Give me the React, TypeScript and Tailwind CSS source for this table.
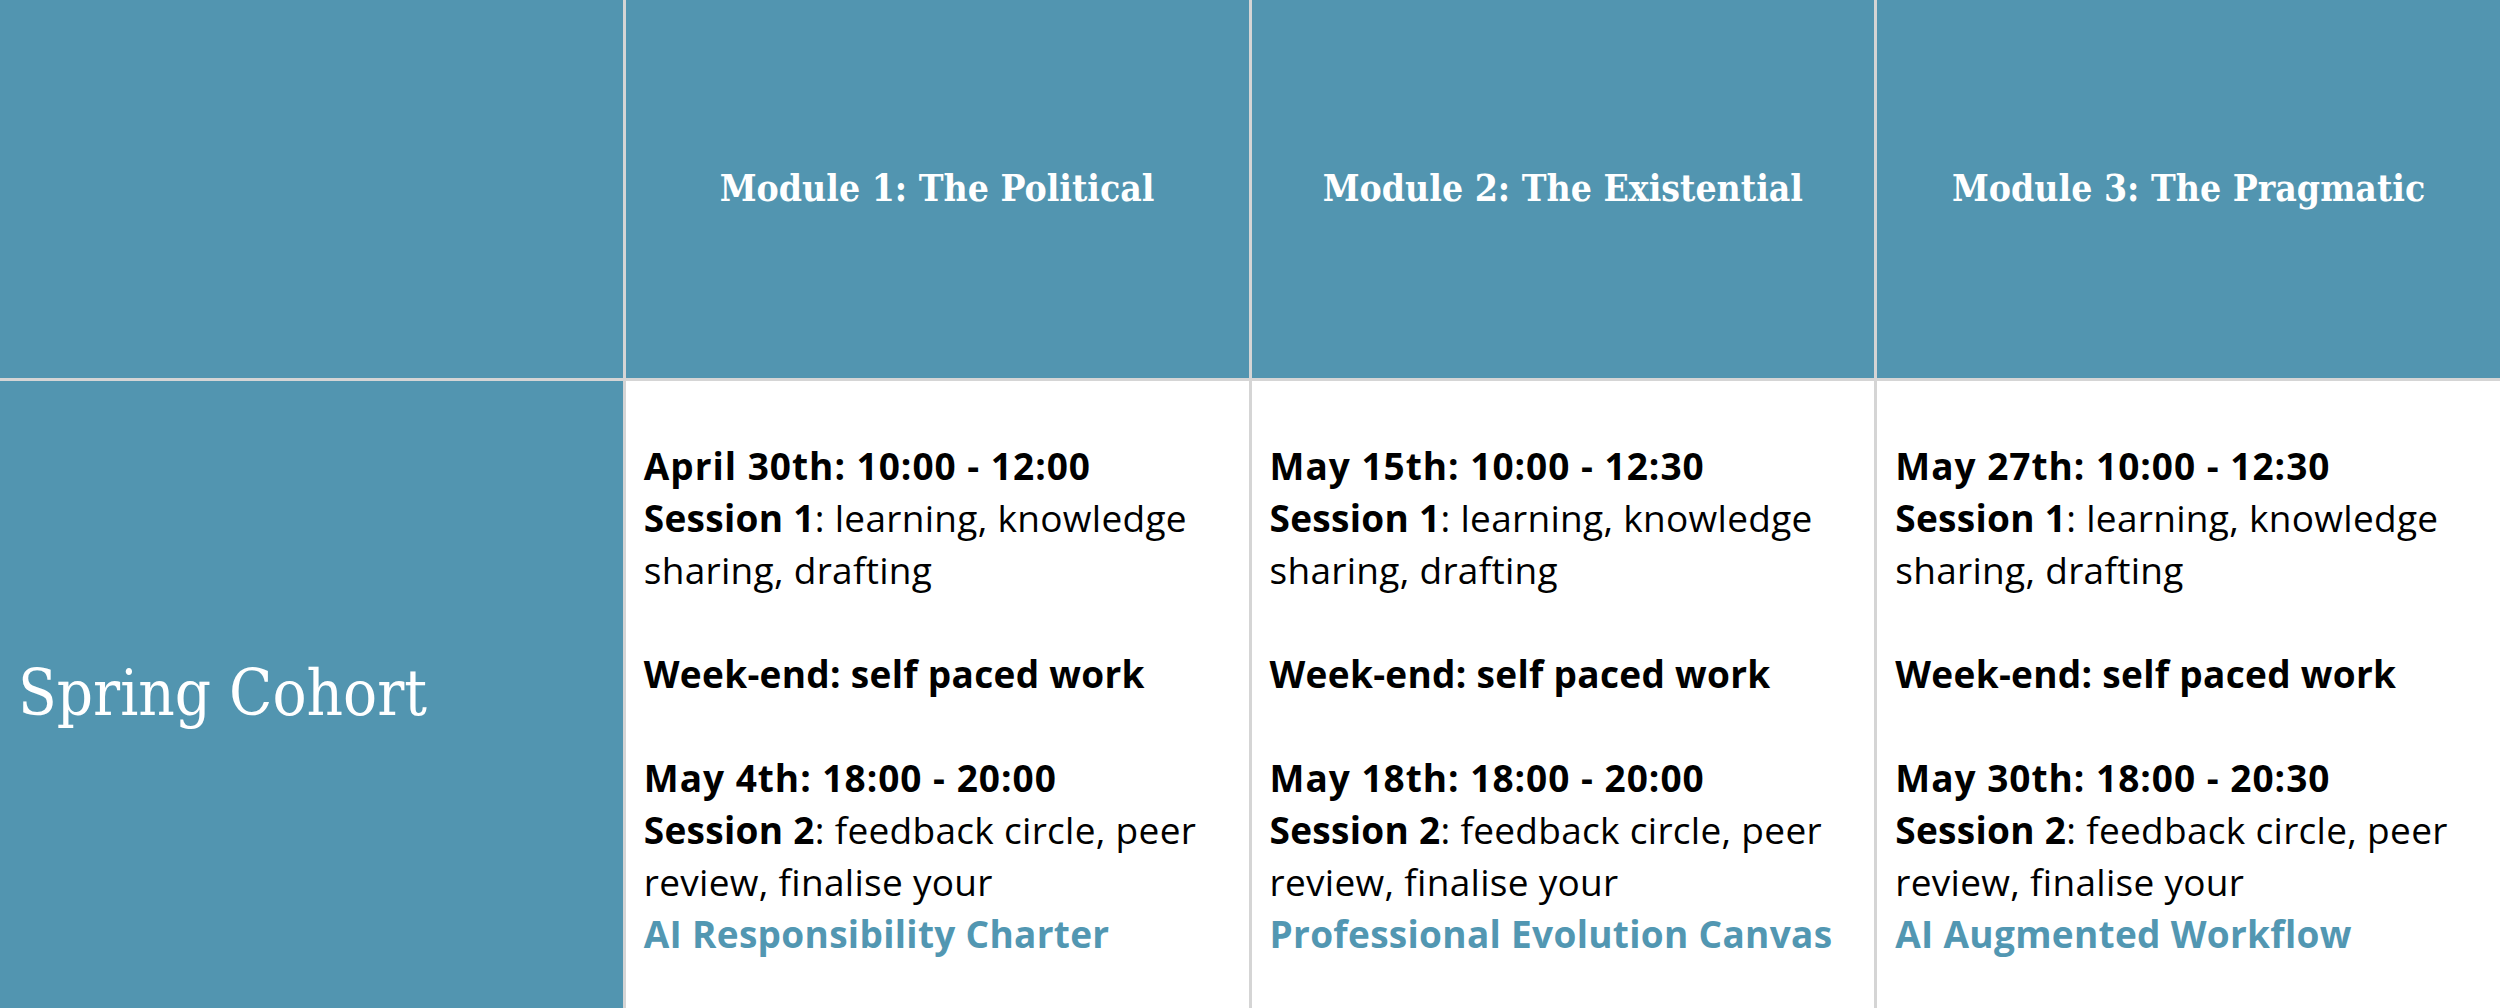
const modules = [
  {
    title: "Module 1: The Political",
    first: "April 30th: 10:00 - 12:00",
    second: "May 4th: 18:00 - 20:00",
    output: "AI Responsibility Charter",
  },
  {
    title: "Module 2: The Existential",
    first: "May 15th: 10:00 - 12:30",
    second: "May 18th: 18:00 - 20:00",
    output: "Professional Evolution Canvas",
  },
  {
    title: "Module 3: The Pragmatic",
    first: "May 27th: 10:00 - 12:30",
    second: "May 30th: 18:00 - 20:30",
    output: "AI Augmented Workflow",
  },
];

const serif = "font-['DejaVu_Serif_Condensed','DejaVu_Serif',serif]";
const sans = "font-['Open_Sans',sans-serif]";

const App = () => {
  return (
    <div className="h-[1008px] w-full overflow-hidden bg-[#d5d5d5]">
      <div className="grid h-full grid-cols-4 grid-rows-[378px_1fr] gap-[3px]">
        {/* Header row */}
        <div className="bg-[#5295b0]" />
        {modules.map((m) => (
          <div key={m.title} className="flex items-center justify-center bg-[#5295b0]">
            <h2 className={`${serif} text-[37px] font-bold text-white`}>{m.title}</h2>
          </div>
        ))}

        {/* Cohort row */}
        <div className="flex items-center bg-[#5295b0] pl-[18px]">
          <div className={`${serif} text-[63px] text-white`}>Spring Cohort</div>
        </div>
        {modules.map((m) => (
          <div key={m.output} className="flex items-center bg-white px-[18px] pt-[10px]">
            <div className={`${sans} text-[37px] leading-[52px] tracking-[0.3px] text-black`}>
              <div className="font-bold tracking-[1px]">{m.first}</div>
              <div>
                <span className="font-bold">Session 1</span>: learning, knowledge
                <br />
                sharing, drafting
              </div>
              <div className="h-[52px]" />
              <div className="font-bold">Week-end: self paced work</div>
              <div className="h-[52px]" />
              <div className="font-bold tracking-[1px]">{m.second}</div>
              <div>
                <span className="font-bold">Session 2</span>: feedback circle, peer
                <br />
                review, finalise your
              </div>
              <div className="font-bold text-[#5297b2]">{m.output}</div>
            </div>
          </div>
        ))}
      </div>
    </div>
  );
};

export default App;
